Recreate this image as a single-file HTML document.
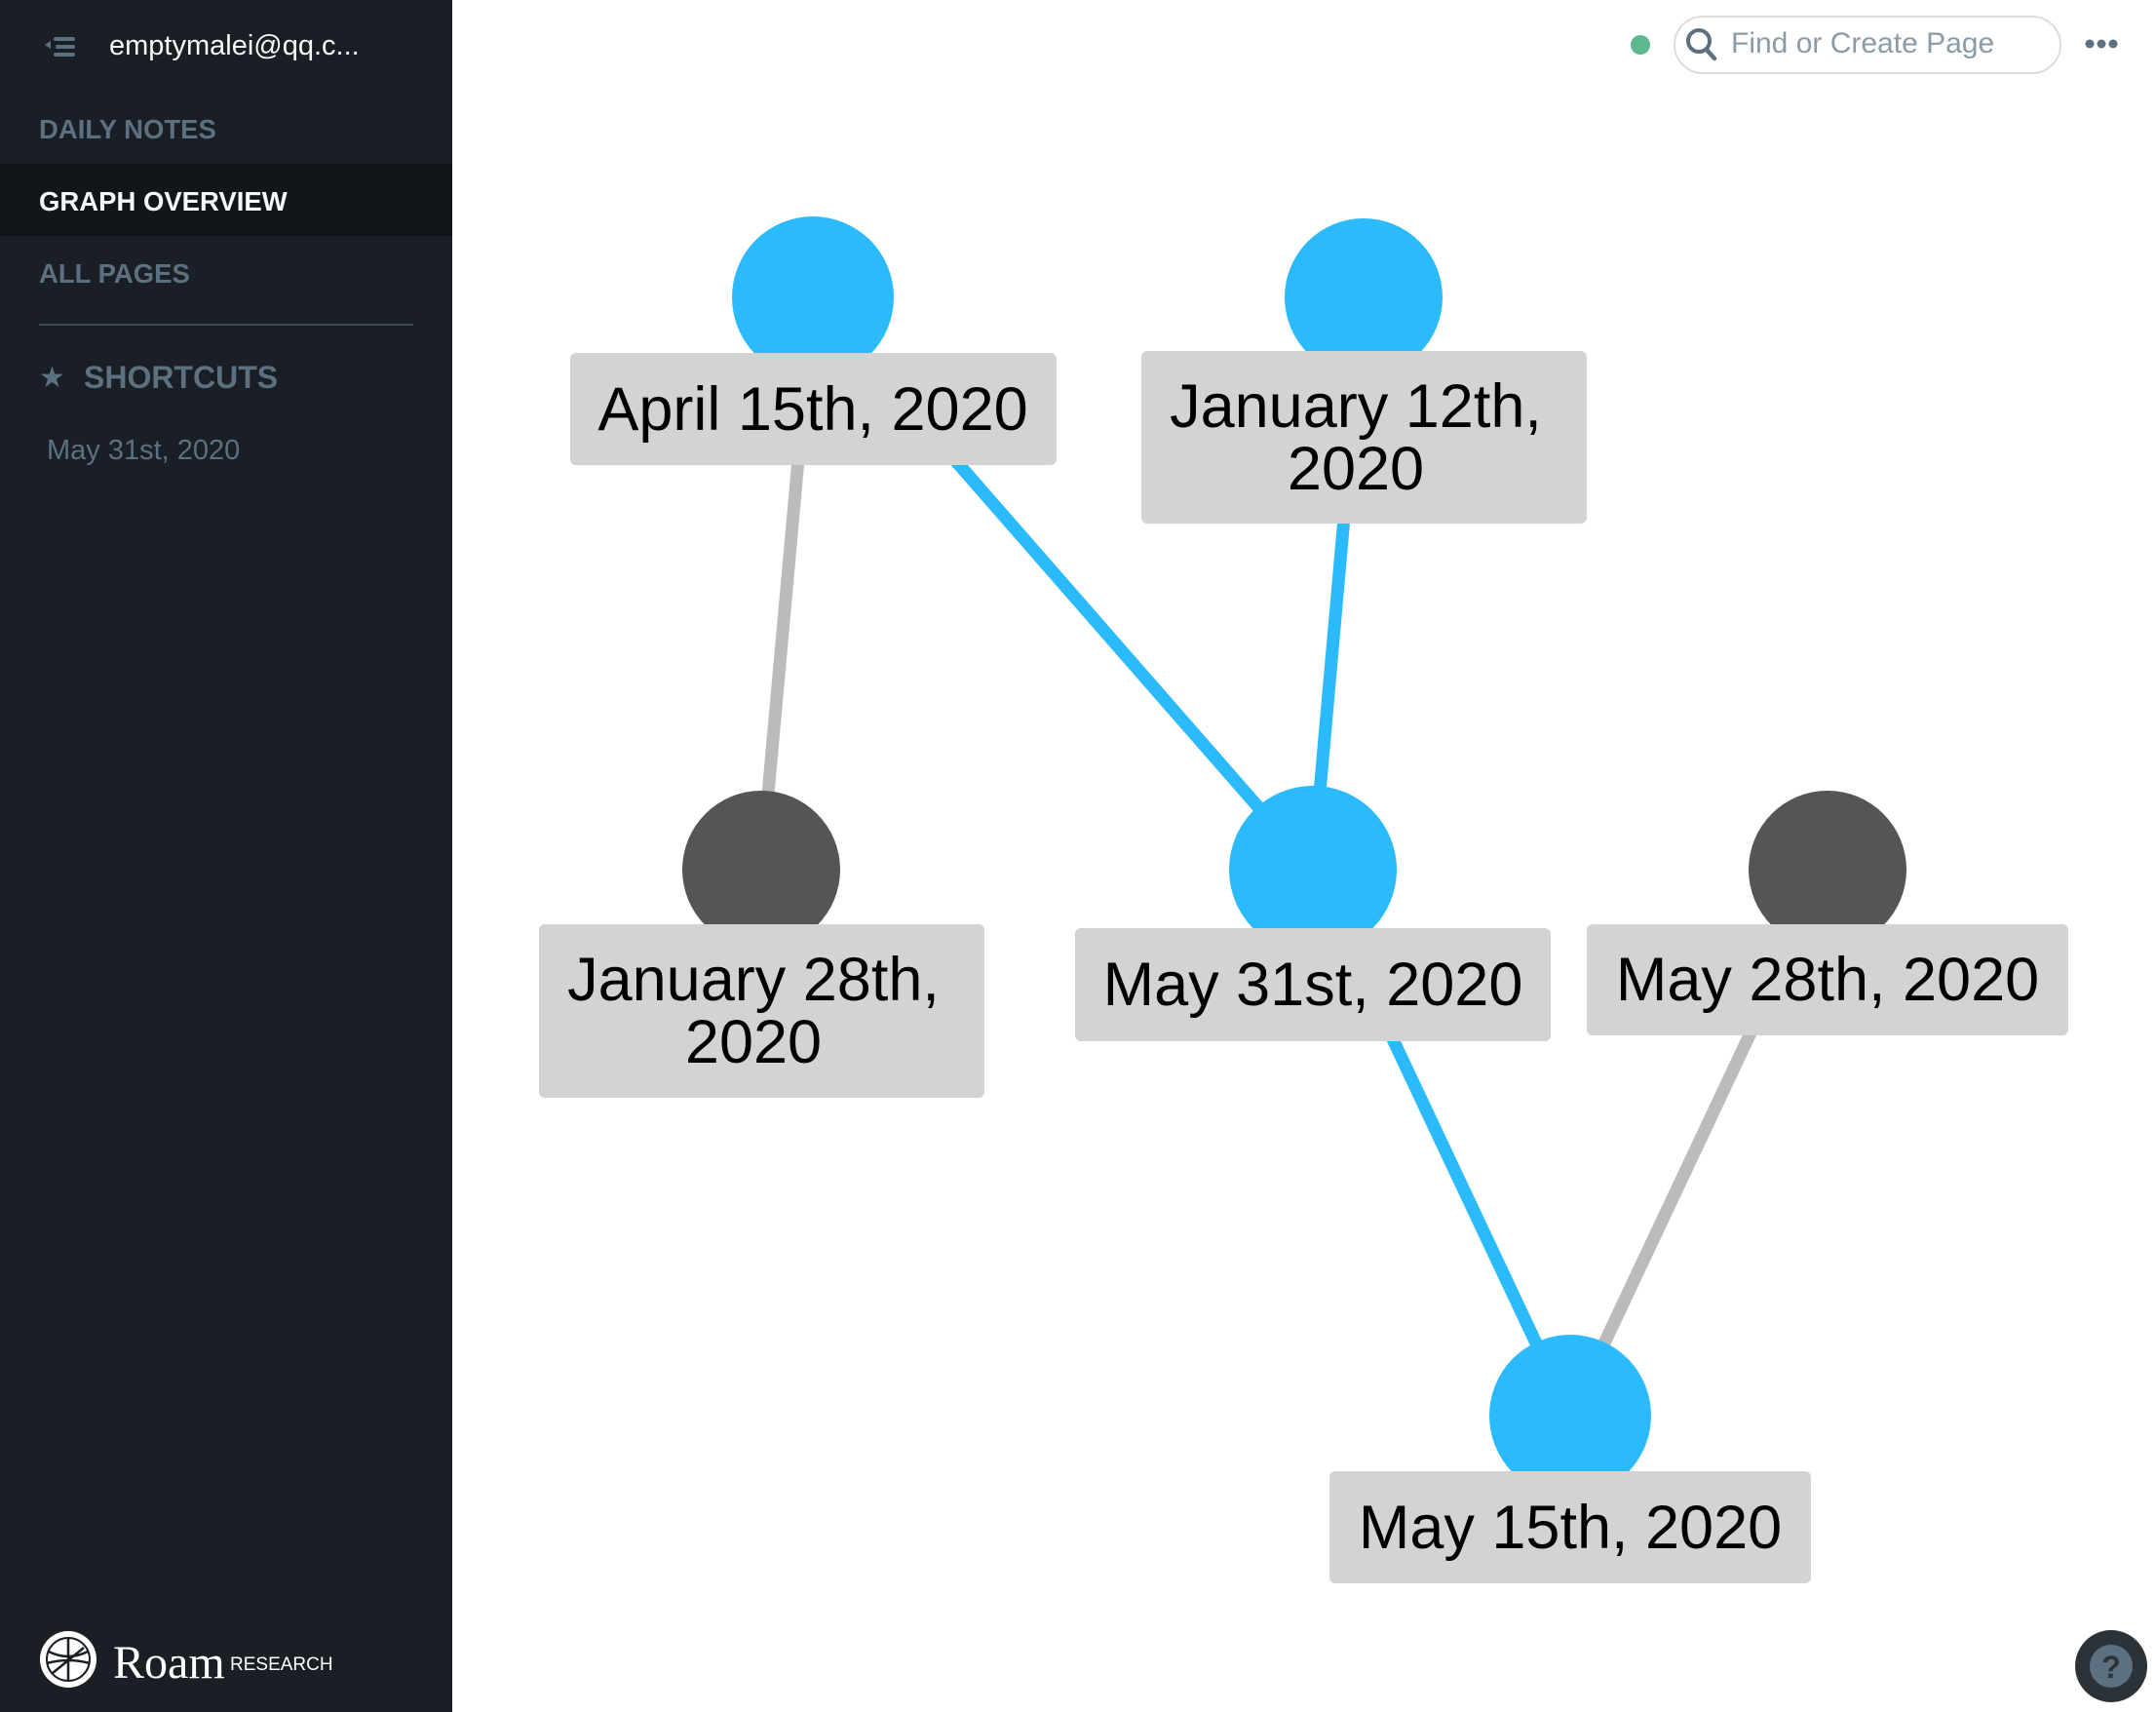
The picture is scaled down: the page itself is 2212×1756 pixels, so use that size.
<!DOCTYPE html>
<html><head><meta charset="utf-8"><style>
*{margin:0;padding:0;box-sizing:border-box}
body{width:2212px;height:1756px;overflow:hidden;background:#fff;font-family:"Liberation Sans",Arial,sans-serif;position:relative}
#sb{position:absolute;left:0;top:0;width:464px;height:1756px;background:#1a1f26}
.t{position:absolute;white-space:nowrap}
.nav{font-weight:bold;font-size:27.5px;color:#5c7080;left:40px}
</style></head><body>
<div id="sb">
 <svg class="t" style="left:44px;top:36px" width="36" height="28" viewBox="0 0 36 28"><polygon points="2,10 8,6 8,14" fill="#5c7080"/><rect x="11" y="2" width="22" height="4" rx="2" fill="#5c7080"/><rect x="13" y="10" width="20" height="4" rx="2" fill="#5c7080"/><rect x="11" y="18" width="22" height="4" rx="2" fill="#5c7080"/></svg>
 <div class="t" style="left:112px;top:31px;font-size:29px;color:#f5f8fa">emptymalei@qq.c...</div>
 <div class="t nav" style="top:117px">DAILY NOTES</div>
 <div style="position:absolute;left:0;top:168px;width:464px;height:74px;background:#11161a"></div>
 <div class="t nav" style="top:191px;color:#f5f8fa">GRAPH OVERVIEW</div>
 <div class="t nav" style="top:265px">ALL PAGES</div>
 <div style="position:absolute;left:40px;top:332px;width:384px;height:2px;background:#394b59"></div>
 <div class="t" style="left:40px;top:370px;font-size:30px;color:#5c7080">★</div>
 <div class="t nav" style="left:86px;top:369px;font-size:32px">SHORTCUTS</div>
 <div class="t" style="left:48px;top:446px;font-size:29px;color:#5c7080">May 31st, 2020</div>
 <svg class="t" style="left:40px;top:1672px" width="60" height="60" viewBox="0 0 60 60"><circle cx="30" cy="30" r="29" fill="#fff"/><circle cx="30" cy="30" r="22" fill="none" stroke="#1a1f26" stroke-width="2"/><path d="M30 8v44M10 22q20 10 40 0M14 44L46 18M8 34q22-6 44 0" stroke="#1a1f26" stroke-width="2.5" fill="none"/></svg>
 <div class="t" style="left:116px;top:1678px;font-family:'Liberation Serif',serif;font-size:48px;color:#fff">Roam</div>
 <div class="t" style="left:236px;top:1697px;font-size:19px;color:#fff">RESEARCH</div>
</div>
<div style="position:absolute;left:1673px;top:36px;width:20px;height:20px;border-radius:50%;background:#5cb88f"></div>
<div style="position:absolute;left:1717px;top:16px;width:398px;height:60px;border:2px solid #d8dde1;border-radius:30px"></div>
<svg class="t" style="left:1729px;top:28px" width="34" height="36" viewBox="0 0 34 36"><circle cx="14" cy="14" r="11" fill="none" stroke="#5c7080" stroke-width="4"/><path d="M22 23l8 9" stroke="#5c7080" stroke-width="4.5" stroke-linecap="round"/></svg>
<div class="t" style="left:1776px;top:28px;font-size:30px;color:#8a9ba8">Find or Create Page</div>
<svg class="t" style="left:2138px;top:38px" width="36" height="14"><circle cx="6" cy="7" r="4.5" fill="#5c7080"/><circle cx="18" cy="7" r="4.5" fill="#5c7080"/><circle cx="30" cy="7" r="4.5" fill="#5c7080"/></svg>
<svg class="t" style="left:0;top:0" width="2212" height="1756">
 <g stroke-width="13">
  <line x1="834" y1="305" x2="781" y2="892" stroke="#bbb"/>
  <line x1="834" y1="305" x2="1347" y2="892" stroke="#2bbbfd"/>
  <line x1="1399" y1="305" x2="1347" y2="892" stroke="#2bbbfd"/>
  <line x1="1347" y1="892" x2="1611" y2="1452" stroke="#2bbbfd"/>
  <line x1="1875" y1="892" x2="1611" y2="1452" stroke="#bbb"/>
 </g>
 <circle cx="834" cy="305" r="83" fill="#2bbbfd"/>
 <circle cx="1399" cy="305" r="81" fill="#2bbbfd"/>
 <circle cx="781" cy="892" r="81" fill="#555"/>
 <circle cx="1347" cy="892" r="86" fill="#2bbbfd"/>
 <circle cx="1875" cy="892" r="81" fill="#555"/>
 <circle cx="1611" cy="1452" r="83" fill="#2bbbfd"/>
 <g fill="#d3d3d3">
  <rect x="585" y="362" width="499" height="115" rx="6"/>
  <rect x="1171" y="360" width="457" height="177" rx="6"/>
  <rect x="553" y="948" width="457" height="178" rx="6"/>
  <rect x="1103" y="952" width="488" height="116" rx="6"/>
  <rect x="1628" y="948" width="494" height="114" rx="6"/>
  <rect x="1364" y="1509" width="494" height="115" rx="6"/>
 </g>
 <g font-family="Liberation Sans,Arial,sans-serif" font-size="63" text-anchor="middle" fill="#000">
  <text x="834" y="441">April 15th, 2020</text>
  <text x="1391" y="438">January 12th,</text>
  <text x="1391" y="502">2020</text>
  <text x="773" y="1026">January 28th,</text>
  <text x="773" y="1090">2020</text>
  <text x="1347" y="1031">May 31st, 2020</text>
  <text x="1875" y="1026">May 28th, 2020</text>
  <text x="1611" y="1588">May 15th, 2020</text>
 </g>
 <circle cx="2166" cy="1709" r="37" fill="#2b3238"/>
 <circle cx="2166" cy="1709" r="22" fill="#5c7080"/>
 <text x="2166" y="1721" font-family="Liberation Sans,Arial,sans-serif" font-weight="bold" font-size="32" text-anchor="middle" fill="#2b3238">?</text>
</svg>
</body></html>
